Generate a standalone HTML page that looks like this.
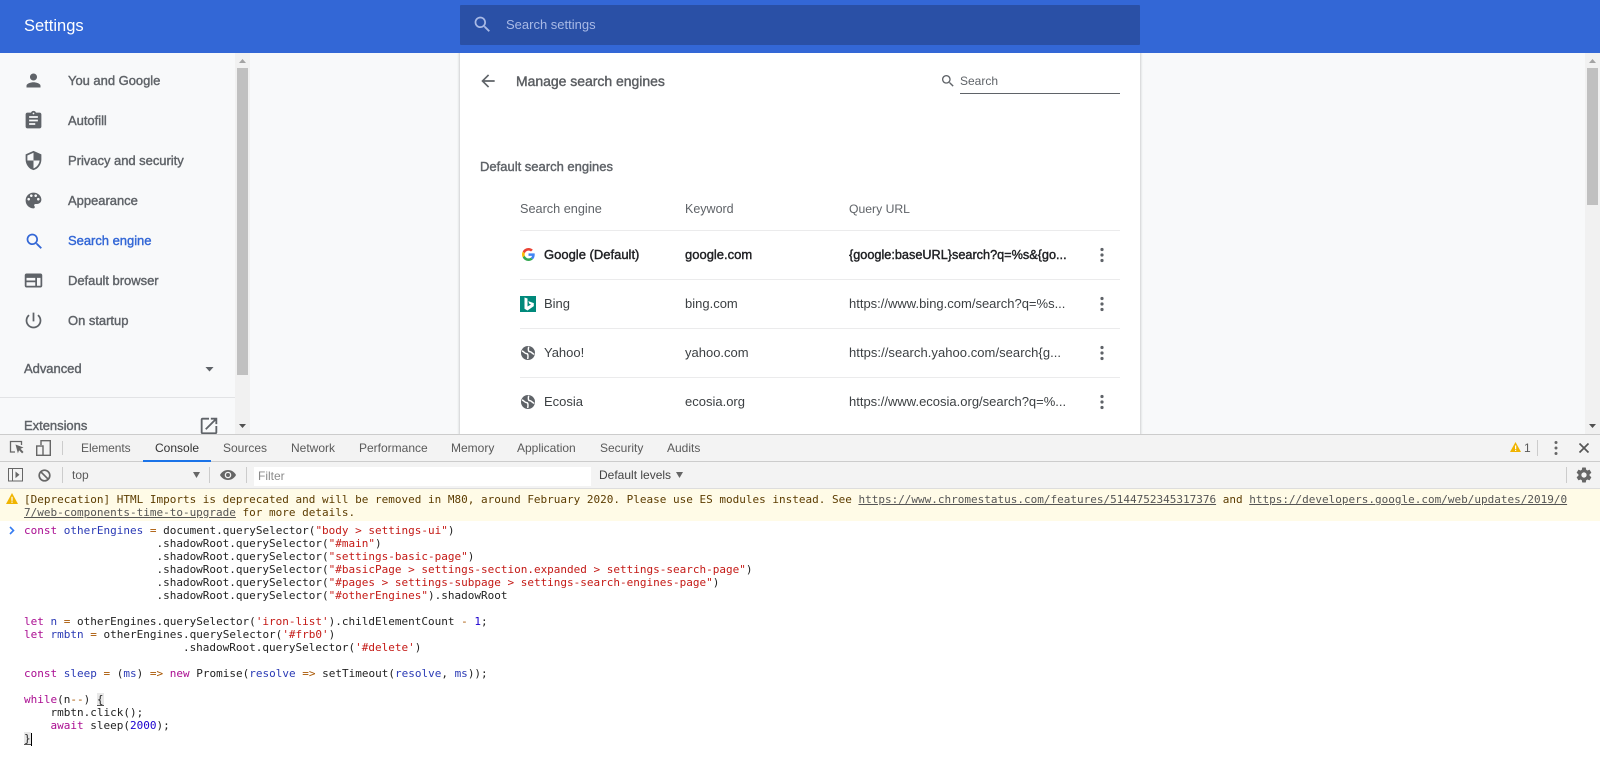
<!DOCTYPE html>
<html><head><meta charset="utf-8"><title>Settings</title>
<style>
html,body{margin:0;padding:0;width:1600px;height:770px;overflow:hidden;background:#fff}
body{position:relative;font-family:"Liberation Sans",sans-serif;font-size:13px;color:#5f6368}
.a{position:absolute}
.t{position:absolute;white-space:pre;line-height:20px;height:20px}
.m{font-weight:normal;-webkit-text-stroke:.4px currentColor}
svg{position:absolute;display:block}
.side{color:#5f6368;font-size:13px;left:68px;-webkit-text-stroke:.4px currentColor;letter-spacing:-.03px}
.cell{color:#3c4043}
.tab{position:absolute;top:438px;font-size:12px;line-height:20px;color:#5a5a5a;white-space:pre}
.sep{position:absolute;width:1px;background:#ccc}
pre{position:absolute;margin:0;font-family:"DejaVu Sans Mono",monospace;font-size:11px;line-height:13px;color:#222}
.k{color:#aa0d91}.d{color:#2a3ab5}.o{color:#a85500}.s{color:#c41a16}.n{color:#1c00cf}
.b{background:#e8e8e8;box-shadow:inset 0 -1px 0 #555}
</style></head><body>

<!-- header -->
<div class="a" style="left:0;top:0;width:1600px;height:53px;background:#3367d6"></div>
<div class="t" style="left:24px;top:16px;font-size:16.500px;color:#fff">Settings</div>
<div class="a" style="left:460px;top:5px;width:680px;height:40px;background:#2a50a6;border-radius:1px"></div>
<svg style="left:472px;top:14px" width="21" height="21" viewBox="0 0 24 24" fill="#a9bae6"><path d="M15.5 14h-.79l-.28-.27C15.41 12.59 16 11.11 16 9.5 16 5.91 13.09 3 9.5 3S3 5.91 3 9.5 5.91 16 9.5 16c1.61 0 3.09-.59 4.23-1.57l.27.28v.79l5 4.99L20.49 19l-4.99-5zm-6 0C7.01 14 5 11.99 5 9.5S7.01 5 9.5 5 14 7.01 14 9.5 11.99 14 9.5 14z"/></svg>
<div class="t" style="left:506px;top:15px;font-size:13px;color:#a9bae6">Search settings</div>

<!-- page bg -->
<div class="a" style="left:0;top:53px;width:1600px;height:381px;background:#f8f9fa"></div>

<!-- sidebar -->
<svg style="left:23px;top:70px" width="21" height="21" viewBox="0 0 24 24" fill="#5f6368"><path d="M12 12c2.21 0 4-1.79 4-4s-1.79-4-4-4-4 1.79-4 4 1.79 4 4 4zm0 2c-2.67 0-8 1.34-8 4v2h16v-2c0-2.66-5.33-4-8-4z"/></svg>
<div class="t side" style="top:71px">You and Google</div>
<svg style="left:23px;top:110px" width="21" height="21" viewBox="0 0 24 24" fill="#5f6368"><path d="M19 3h-4.18C14.4 1.84 13.3 1 12 1c-1.3 0-2.4.84-2.82 2H5c-1.1 0-2 .9-2 2v14c0 1.1.9 2 2 2h14c1.1 0 2-.9 2-2V5c0-1.1-.9-2-2-2zm-7 0c.55 0 1 .45 1 1s-.45 1-1 1-1-.45-1-1 .45-1 1-1zm2 14H7v-2h7v2zm3-4H7v-2h10v2zm0-4H7V7h10v2z"/></svg>
<div class="t side" style="top:111px">Autofill</div>
<svg style="left:23px;top:150px" width="21" height="21" viewBox="0 0 24 24" fill="#5f6368"><path d="M12 1L3 5v6c0 5.55 3.84 10.74 9 12 5.16-1.26 9-6.45 9-12V5l-9-4zm0 10.99h7c-.53 4.12-3.28 7.79-7 8.94V12H5V6.3l7-3.11v8.8z"/></svg>
<div class="t side" style="top:151px">Privacy and security</div>
<svg style="left:23px;top:190px" width="21" height="21" viewBox="0 0 24 24" fill="#5f6368"><path d="M12 3c-4.97 0-9 4.03-9 9s4.03 9 9 9c.83 0 1.5-.67 1.5-1.5 0-.39-.15-.74-.39-1.01-.23-.26-.38-.61-.38-.99 0-.83.67-1.5 1.5-1.5H16c2.76 0 5-2.24 5-5 0-4.42-4.03-8-9-8zm-5.5 9c-.83 0-1.5-.67-1.5-1.5S5.67 9 6.5 9 8 9.67 8 10.5 7.33 12 6.5 12zm3-4C8.67 8 8 7.33 8 6.5S8.67 5 9.5 5s1.5.67 1.5 1.5S10.33 8 9.5 8zm5 0c-.83 0-1.5-.67-1.5-1.5S13.67 5 14.5 5s1.5.67 1.5 1.5S15.33 8 14.5 8zm3 4c-.83 0-1.5-.67-1.5-1.5S16.67 9 17.5 9s1.5.67 1.5 1.5-.67 1.5-1.5 1.5z"/></svg>
<div class="t side" style="top:191px">Appearance</div>
<svg style="left:24px;top:231px" width="21" height="21" viewBox="0 0 24 24" fill="#3367d6"><path d="M15.5 14h-.79l-.28-.27C15.41 12.59 16 11.11 16 9.5 16 5.91 13.09 3 9.5 3S3 5.91 3 9.5 5.91 16 9.5 16c1.61 0 3.09-.59 4.23-1.57l.27.28v.79l5 4.99L20.49 19l-4.99-5zm-6 0C7.01 14 5 11.99 5 9.5S7.01 5 9.5 5 14 7.01 14 9.5 11.99 14 9.5 14z"/></svg>
<div class="t side" style="top:231px;color:#3367d6">Search engine</div>
<svg style="left:23px;top:270px" width="21" height="21" viewBox="0 0 24 24" fill="#5f6368"><path fill-rule="evenodd" d="M4 4h16c1.1 0 2 .9 2 2v12c0 1.1-.9 2-2 2H4c-1.1 0-2-.9-2-2V6c0-1.100.9-2 2-2zM4 9v3h10V9zM4 14v4h10v-4zM16 9v9h4V9z"/></svg>
<div class="t side" style="top:271px">Default browser</div>
<svg style="left:23px;top:310px" width="21" height="21" viewBox="0 0 24 24" fill="#5f6368"><path d="M13 3h-2v10h2V3zm4.830 2.170l-1.420 1.420C17.990 7.860 19 9.810 19 12c0 3.870-3.130 7-7 7s-7-3.130-7-7c0-2.190 1.010-4.140 2.580-5.420L6.170 5.170C4.230 6.820 3 9.260 3 12c0 4.970 4.030 9 9 9s9-4.030 9-9c0-2.740-1.230-5.180-3.170-6.830z"/></svg>
<div class="t side" style="top:311px">On startup</div>
<div class="t side" style="left:24px;top:359px">Advanced</div>
<svg style="left:205px;top:367px" width="9" height="4.500" viewBox="0 0 9 5" fill="#5f6368"><path d="M0 0h9L4.500 5z"/></svg>
<div class="a" style="left:0;top:397px;width:235px;height:1px;background:#e2e3e5"></div>
<div class="a" style="left:0;top:410px;width:235px;height:24px;overflow:hidden">
  <div class="t side" style="left:24px;top:6px">Extensions</div>
  <svg style="left:198px;top:5px" width="22" height="22" viewBox="0 0 24 24" fill="#5f6368"><path d="M19 19H5V5h7V3H5c-1.110 0-2 .9-2 2v14c0 1.100.89 2 2 2h14c1.100 0 2-.9 2-2v-7h-2v7zM14 3v2h3.590l-9.830 9.830 1.410 1.410L19 6.410V10h2V3h-7z"/></svg>
</div>

<!-- sidebar scrollbar -->
<div class="a" style="left:235px;top:53px;width:15px;height:381px;background:#f1f1f1"></div>
<div class="a" style="left:237px;top:68px;width:11px;height:307px;background:#c0c0c0"></div>
<svg style="left:239px;top:59px" width="7" height="4" viewBox="0 0 7 4" fill="#a3a3a3"><path d="M0 4h7L3.500 0z"/></svg>
<svg style="left:239px;top:424px" width="7" height="4" viewBox="0 0 7 4" fill="#505050"><path d="M0 0h7L3.500 4z"/></svg>

<!-- page scrollbar -->
<div class="a" style="left:1585px;top:53px;width:15px;height:381px;background:#f1f1f1"></div>
<div class="a" style="left:1587px;top:68px;width:11px;height:137px;background:#c0c0c0"></div>
<svg style="left:1589px;top:59px" width="7" height="4" viewBox="0 0 7 4" fill="#a3a3a3"><path d="M0 4h7L3.500 0z"/></svg>
<svg style="left:1589px;top:424px" width="7" height="4" viewBox="0 0 7 4" fill="#505050"><path d="M0 0h7L3.500 4z"/></svg>

<!-- card -->
<div class="a" style="left:460px;top:53px;width:680px;height:381px;background:#fff;box-shadow:0 0 2px 1px rgba(60,64,67,.22)"></div>
<div class="a" style="left:440px;top:0;width:720px;height:5px;background:#3367d6"></div>
<div class="a" style="left:440px;top:45px;width:720px;height:8px;background:#3367d6"></div>
<svg style="left:478px;top:71px" width="20" height="20" viewBox="0 0 24 24" fill="#5f6368"><path d="M20 11H7.830l5.590-5.590L12 4l-8 8 8 8 1.410-1.410L7.830 13H20v-2z"/></svg>
<div class="t m" style="left:516px;top:71px;font-size:14px;letter-spacing:-.03px;color:#5a5d61">Manage search engines</div>
<svg style="left:940px;top:73px" width="16" height="16" viewBox="0 0 24 24" fill="#5f6368"><path d="M15.500 14h-.79l-.28-.27C15.410 12.590 16 11.110 16 9.500 16 5.910 13.090 3 9.500 3S3 5.910 3 9.500 5.910 16 9.500 16c1.610 0 3.090-.59 4.230-1.570l.27.28v.79l5 4.990L20.490 19l-4.990-5zm-6 0C7.010 14 5 11.990 5 9.500S7.010 5 9.500 5 14 7.010 14 9.500 11.990 14 9.500 14z"/></svg>
<div class="t" style="left:960px;top:71px;font-size:12px;color:#5f6368">Search</div>
<div class="a" style="left:960px;top:93px;width:160px;height:1px;background:#5f6368"></div>
<div class="t m" style="left:480px;top:157px;font-size:13px;color:#5f6368">Default search engines</div>
<div class="t" style="left:520px;top:199px;font-size:12.700px">Search engine</div>
<div class="t" style="left:685px;top:199px;font-size:12.500px">Keyword</div>
<div class="t" style="left:849px;top:199px;font-size:12.200px">Query URL</div>
<div class="a" style="left:520px;top:230px;width:600px;height:1px;background:#ebebec"></div>
<div class="a" style="left:520px;top:279px;width:600px;height:1px;background:#ebebec"></div>
<div class="a" style="left:520px;top:328px;width:600px;height:1px;background:#ebebec"></div>
<div class="a" style="left:520px;top:377px;width:600px;height:1px;background:#ebebec"></div>

<svg style="left:522px;top:248px" width="13" height="13" viewBox="0 0 48 48"><path fill="#EA4335" d="M24 9.500c3.540 0 6.710 1.220 9.210 3.600l6.850-6.850C35.900 2.380 30.470 0 24 0 14.620 0 6.510 5.380 2.560 13.220l7.980 6.190C12.430 13.720 17.740 9.500 24 9.500z"/><path fill="#4285F4" d="M46.980 24.550c0-1.570-.15-3.090-.38-4.550H24v9.020h12.940c-.58 2.960-2.260 5.480-4.780 7.180l7.730 6c4.510-4.180 7.090-10.360 7.090-17.650z"/><path fill="#FBBC05" d="M10.530 28.590c-.48-1.450-.76-2.990-.76-4.590s.27-3.140.76-4.590l-7.980-6.190C.92 16.460 0 20.120 0 24c0 3.880.92 7.540 2.560 10.780l7.970-6.190z"/><path fill="#34A853" d="M24 48c6.480 0 11.930-2.130 15.890-5.810l-7.730-6c-2.150 1.450-4.920 2.300-8.160 2.300-6.260 0-11.570-4.220-13.470-9.910l-7.980 6.190C6.510 42.620 14.620 48 24 48z"/></svg>
<div class="t m cell" style="left:544px;top:245px;color:#202124">Google (Default)</div>
<div class="t m cell" style="left:685px;top:245px;color:#202124">google.com</div>
<div class="t m cell" style="left:849px;top:245px;color:#202124;font-size:12.700px;width:220px;overflow:hidden">{google:baseURL}search?q=%s&amp;{go...</div>

<svg style="left:520px;top:296px" width="16" height="16" viewBox="0 0 16 16"><rect width="16" height="16" fill="#00897b"/><path fill="#fff" d="M4.500 1.500l3 1v8l3.500-2-1.700-.8-1-2.600 5.500 2v3L7.500 14.500l-3-1.700z"/></svg>
<div class="t cell" style="left:544px;top:294px">Bing</div>
<div class="t cell" style="left:685px;top:294px">bing.com</div>
<div class="t cell" style="left:849px;top:294px;width:220px;overflow:hidden">https://www.bing.com/search?q=%s...</div>

<svg style="left:520px;top:345px" width="16" height="16" viewBox="0 0 24 24"><circle cx="12" cy="12" r="10.500" fill="#5f6368"/><path d="M3 9c3 .5 4 4 7 4 2 0 2.500 3 1.500 8M21.500 14c-3-.5-4-4-7-4-2 0-2.500-3-1.500-7.500" fill="none" stroke="#fff" stroke-width="2.200"/></svg>
<div class="t cell" style="left:544px;top:343px">Yahoo!</div>
<div class="t cell" style="left:685px;top:343px">yahoo.com</div>
<div class="t cell" style="left:849px;top:343px;width:220px;overflow:hidden;letter-spacing:.05px">https://search.yahoo.com/search{g...</div>

<svg style="left:520px;top:394px" width="16" height="16" viewBox="0 0 24 24"><circle cx="12" cy="12" r="10.500" fill="#5f6368"/><path d="M3 9c3 .5 4 4 7 4 2 0 2.500 3 1.500 8M21.500 14c-3-.5-4-4-7-4-2 0-2.500-3-1.500-7.500" fill="none" stroke="#fff" stroke-width="2.200"/></svg>
<div class="t cell" style="left:544px;top:392px">Ecosia</div>
<div class="t cell" style="left:685px;top:392px">ecosia.org</div>
<div class="t cell" style="left:849px;top:392px;width:220px;overflow:hidden">https://www.ecosia.org/search?q=%...</div>

<svg style="left:1100px;top:247px" width="4" height="16" viewBox="0 0 4 16" fill="#5f6368"><circle cx="2" cy="2.500" r="1.600"/><circle cx="2" cy="8" r="1.600"/><circle cx="2" cy="13.500" r="1.600"/></svg>
<svg style="left:1100px;top:296px" width="4" height="16" viewBox="0 0 4 16" fill="#5f6368"><circle cx="2" cy="2.500" r="1.600"/><circle cx="2" cy="8" r="1.600"/><circle cx="2" cy="13.500" r="1.600"/></svg>
<svg style="left:1100px;top:345px" width="4" height="16" viewBox="0 0 4 16" fill="#5f6368"><circle cx="2" cy="2.500" r="1.600"/><circle cx="2" cy="8" r="1.600"/><circle cx="2" cy="13.500" r="1.600"/></svg>
<svg style="left:1100px;top:394px" width="4" height="16" viewBox="0 0 4 16" fill="#5f6368"><circle cx="2" cy="2.500" r="1.600"/><circle cx="2" cy="8" r="1.600"/><circle cx="2" cy="13.500" r="1.600"/></svg>

<!-- devtools -->
<div class="a" style="left:0;top:434px;width:1600px;height:336px;background:#fff"></div>
<div class="a" style="left:0;top:434px;width:1600px;height:1px;background:#ccc"></div>
<div class="a" style="left:0;top:435px;width:1600px;height:26px;background:#f3f3f3"></div>
<div class="a" style="left:0;top:461px;width:1600px;height:1px;background:#ccc"></div>
<div class="a" style="left:0;top:462px;width:1600px;height:26px;background:#f3f3f3"></div>
<div class="a" style="left:0;top:488px;width:1600px;height:1px;background:#ddd"></div>

<svg style="left:9px;top:439px" width="16" height="16" viewBox="0 0 16 16" fill="none"><path d="M6 13H1.500V2.500h11V6" stroke="#666" stroke-width="1.300"/><path d="M6.500 5.500l8 3-3 1.300 3 3.200-1.400 1.400-3-3.200-1.200 3.200z" fill="#666"/></svg>
<svg style="left:36px;top:440px" width="15" height="16" viewBox="0 0 15 16" fill="none" stroke="#666" stroke-width="1.400"><path d="M5 5V.7h9.300v14.600H7"/><rect x=".7" y="6" width="6.300" height="9.300" fill="#f3f3f3"/></svg>
<div class="sep" style="left:62px;top:441px;height:14px"></div>
<div class="tab" style="left:81px;letter-spacing:-.05px">Elements</div>
<div class="tab" style="left:155px;color:#333">Console</div>
<div class="a" style="left:143px;top:460px;width:68px;height:2px;background:#1a73e8"></div>
<div class="tab" style="left:223px">Sources</div>
<div class="tab" style="left:291px">Network</div>
<div class="tab" style="left:359px">Performance</div>
<div class="tab" style="left:451px">Memory</div>
<div class="tab" style="left:517px">Application</div>
<div class="tab" style="left:600px">Security</div>
<div class="tab" style="left:667px">Audits</div>

<svg style="left:1510px;top:442px" width="11" height="10" viewBox="0 0 11 10"><path d="M5.500 0L11 10H0z" fill="#f0b400"/><rect x="5" y="3.500" width="1.200" height="3.500" fill="#fff"/><rect x="5" y="7.700" width="1.200" height="1.200" fill="#fff"/></svg>
<div class="tab" style="left:1524px;color:#5a5a5a">1</div>
<div class="sep" style="left:1537px;top:440px;height:16px"></div>
<svg style="left:1554px;top:441px" width="4" height="14" viewBox="0 0 4 14" fill="#666"><rect x=".5" y="0" width="3" height="3" rx="1.500"/><rect x=".5" y="5.500" width="3" height="3" rx="1.500"/><rect x=".5" y="11" width="3" height="3" rx="1.500"/></svg>
<svg style="left:1579px;top:443px" width="10" height="10" viewBox="0 0 10 10" stroke="#555" stroke-width="1.700"><path d="M.5.500l9 9M9.500.500l-9 9"/></svg>

<svg style="left:8px;top:468px" width="15" height="14" viewBox="0 0 15 14" fill="none" stroke="#666" stroke-width="1"><rect x=".5" y=".5" width="14" height="12.500"/><path d="M4.500.5v12.500"/><path d="M7.500 3.500l4 3.300-4 3.300z" fill="#666" stroke="none"/></svg>
<svg style="left:38px;top:469px" width="13" height="13" viewBox="0 0 13 13" fill="none" stroke="#666" stroke-width="1.700"><circle cx="6.500" cy="6.500" r="5.300"/><path d="M2.800 2.800l7.400 7.400"/></svg>
<div class="sep" style="left:62px;top:467px;height:16px"></div>
<div class="t" style="left:72px;top:465px;font-size:12px;color:#5a5a5a">top</div>
<svg style="left:193px;top:472px" width="7" height="6" viewBox="0 0 7 6" fill="#666"><path d="M0 0h7L3.500 6z"/></svg>
<div class="sep" style="left:209px;top:467px;height:16px"></div>
<svg style="left:220px;top:470px" width="16" height="10" viewBox="0 0 16 10"><path d="M8 0C4.500 0 1.500 2 0 5c1.500 3 4.500 5 8 5s6.500-2 8-5C14.500 2 11.500 0 8 0z" fill="#666"/><circle cx="8" cy="5" r="3.300" fill="#f3f3f3"/><circle cx="8" cy="5" r="2" fill="#666"/></svg>
<div class="sep" style="left:246px;top:467px;height:16px"></div>
<div class="a" style="left:254px;top:467px;width:337px;height:19px;background:#fff"></div>
<div class="t" style="left:258px;top:466px;font-size:12px;color:#8a8a8a">Filter</div>
<div class="t" style="left:599px;top:465px;font-size:12px;color:#444">Default levels</div>
<svg style="left:676px;top:472px" width="7" height="6" viewBox="0 0 7 6" fill="#666"><path d="M0 0h7L3.500 6z"/></svg>
<div class="sep" style="left:1566px;top:467px;height:16px"></div>
<svg style="left:1575px;top:466px" width="18" height="18" viewBox="0 0 24 24" fill="#666"><path d="M19.430 12.980c.04-.32.07-.64.07-.98s-.03-.66-.07-.98l2.110-1.650c.19-.15.24-.42.12-.64l-2-3.460c-.12-.22-.39-.3-.61-.22l-2.490 1c-.52-.4-1.080-.73-1.690-.98l-.38-2.650C14.460 2.180 14.250 2 14 2h-4c-.25 0-.46.18-.49.42l-.38 2.650c-.61.25-1.170.59-1.690.98l-2.490-1c-.23-.09-.49 0-.61.22l-2 3.460c-.13.22-.07.49.12.64l2.110 1.650c-.04.32-.07.65-.07.98s.03.66.07.98l-2.110 1.650c-.19.15-.24.42-.12.64l2 3.460c.12.22.39.3.61.22l2.490-1c.52.4 1.080.73 1.690.98l.38 2.650c.03.24.24.42.49.42h4c.25 0 .46-.18.49-.42l.38-2.650c.61-.25 1.170-.59 1.690-.98l2.490 1c.23.09.49 0 .61-.22l2-3.460c.12-.22.07-.49-.12-.64l-2.110-1.650zM12 15.500c-1.930 0-3.500-1.570-3.500-3.500s1.570-3.500 3.500-3.500 3.500 1.570 3.500 3.500-1.570 3.500-3.500 3.500z"/></svg>

<!-- warning -->
<div class="a" style="left:0;top:489px;width:1600px;height:32px;background:#fffbe7"></div>
<svg style="left:6px;top:493px" width="12" height="11" viewBox="0 0 12 11"><path d="M6 0l6 11H0z" fill="#f0b400"/><rect x="5.400" y="3.800" width="1.200" height="4" fill="#fff"/><rect x="5.400" y="8.500" width="1.200" height="1.300" fill="#fff"/></svg>
<pre style="left:24px;top:493px;color:#5c3c00">[Deprecation] HTML Imports is deprecated and will be removed in M80, around February 2020. Please use ES modules instead. See <u style="color:#555">https://www.chromestatus.com/features/5144752345317376</u> and <u style="color:#555">https://developers.google.com/web/updates/2019/0</u>
<u style="color:#555">7/web-components-time-to-upgrade</u> for more details.</pre>

<!-- code -->
<svg style="left:9px;top:526px" width="6" height="9" viewBox="0 0 6 9" fill="none" stroke="#367cf1" stroke-width="1.600"><path d="M1 1l3.500 3.500L1 8"/></svg>
<pre style="left:24px;top:524px"><span class="k">const</span> <span class="d">otherEngines</span> <span class="o">=</span> document.querySelector(<span class="s">"body &gt; settings-ui"</span>)
                    .shadowRoot.querySelector(<span class="s">"#main"</span>)
                    .shadowRoot.querySelector(<span class="s">"settings-basic-page"</span>)
                    .shadowRoot.querySelector(<span class="s">"#basicPage &gt; settings-section.expanded &gt; settings-search-page"</span>)
                    .shadowRoot.querySelector(<span class="s">"#pages &gt; settings-subpage &gt; settings-search-engines-page"</span>)
                    .shadowRoot.querySelector(<span class="s">"#otherEngines"</span>).shadowRoot

<span class="k">let</span> <span class="d">n</span> <span class="o">=</span> otherEngines.querySelector(<span class="s">'iron-list'</span>).childElementCount <span class="o">-</span> <span class="n">1</span>;
<span class="k">let</span> <span class="d">rmbtn</span> <span class="o">=</span> otherEngines.querySelector(<span class="s">'#frb0'</span>)
                        .shadowRoot.querySelector(<span class="s">'#delete'</span>)

<span class="k">const</span> <span class="d">sleep</span> <span class="o">=</span> (<span class="d">ms</span>) <span class="o">=&gt;</span> <span class="k">new</span> Promise(<span class="d">resolve</span> <span class="o">=&gt;</span> setTimeout(<span class="d">resolve</span>, <span class="d">ms</span>));

<span class="k">while</span>(n<span class="o">--</span>) <span class="b">{</span>
    rmbtn.click();
    <span class="k">await</span> sleep(<span class="n">2000</span>);
<span class="b">}</span></pre>
<div class="a" style="left:31px;top:733px;width:1px;height:13px;background:#000"></div>

</body></html>
